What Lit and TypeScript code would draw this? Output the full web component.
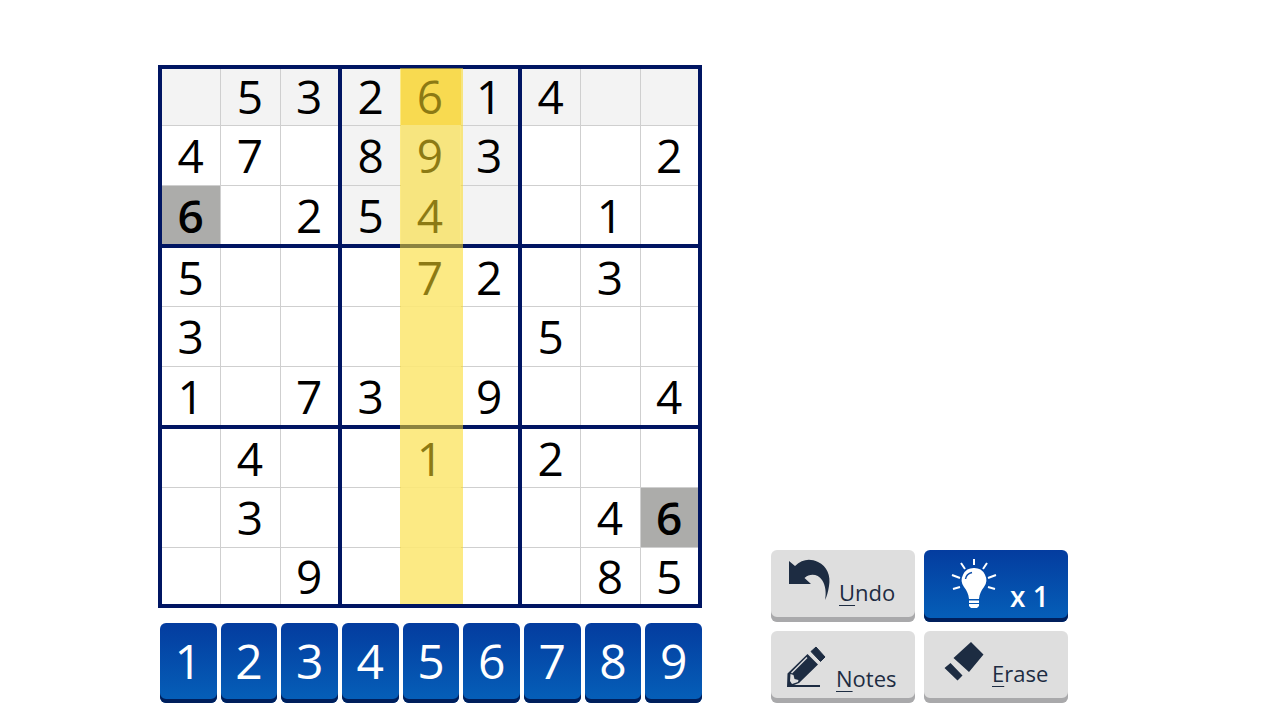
import { LitElement, html, css } from "lit";
import { customElement, state } from "lit/decorators.js";
import { classMap } from "lit/directives/class-map.js";

const PUZZLE = [
  " 532614  ",
  "47 893  2",
  "6 254  1 ",
  "5   72 3 ",
  "3     5  ",
  "1 73 9  4",
  " 4  1 2  ",
  " 3     46",
  "  9    85",
];

@customElement("app-root")
export class AppRoot extends LitElement {
  static styles = css`
    :host {
      display: block;
      min-height: 100vh;
      background: #fff;
      font-family: "Open Sans", "Noto Sans", sans-serif;
      color: #000;
    }
    .game {
      display: flex;
      align-items: flex-end;
      gap: 69px;
      padding: 65px 40px 16px 158px;
    }
    .play {
      flex: 0 1 544px;
      display: flex;
      flex-direction: column;
      gap: 15px;
    }
    .board {
      position: relative;
    }
    .grid {
      width: 100%;
      border-collapse: collapse;
      table-layout: fixed;
      border: 4px solid #001562;
    }
    .cell {
      box-sizing: border-box;
      height: 60px;
      padding: 0;
      border: 1px solid #cfcfcf;
      text-align: center;
      vertical-align: middle;
      font-size: 46px;
      line-height: 52px;
      font-weight: 400;
    }
    .cell.top {
      height: 58px;
      padding-bottom: 2px;
    }
    .cell.hinted {
      border-right-color: #fff;
      border-bottom-color: #f4f4f4;
    }
    .cell.before-hint {
      border-right-color: #fff;
    }
    .cell.right {
      border-right: 4px solid #001562;
    }
    .cell.below {
      height: 61px;
      border-bottom: 4px solid #001562;
    }
    .cell.last {
      height: 59px;
      border-bottom: 4px solid #001562;
    }
    .cell.shaded {
      background: #f3f3f3;
    }
    .cell.crossing {
      background: #f5da88;
      border-right-color: #f5da88;
    }
    .cell.match {
      background: #acacaa;
      font-weight: 600;
    }
    .column-hint {
      position: absolute;
      top: 3px;
      bottom: 4px;
      left: 44.5%;
      width: 11.5%;
      background: rgba(250, 218, 36, 0.56);
      pointer-events: none;
    }
    .digits {
      display: grid;
      grid-template-columns: repeat(9, 1fr);
      gap: 4px;
      padding: 0 0 0 2px;
    }
    .key {
      border: 0;
      margin: 0;
      padding: 0;
      border-radius: 6px;
      color: #fff;
      background: linear-gradient(#043c9f, #0560b9);
      box-shadow: inset 0 -4px 0 #001f5c;
      font-family: inherit;
      cursor: pointer;
    }
    .digit {
      height: 80px;
      padding-bottom: 4px;
      font-size: 48px;
      line-height: 72px;
      font-weight: 400;
    }
    .tools {
      flex: 0 1 297px;
      display: grid;
      grid-template-columns: 1fr 1fr;
      gap: 9px;
    }
    .tool {
      display: flex;
      align-items: flex-end;
      height: 72px;
      padding: 0 0 12px 18px;
      gap: 8px;
      font-size: 22px;
      line-height: 36px;
    }
    .plain {
      color: #1d2c42;
      background: #dedede;
      box-shadow: inset 0 -5px 0 #a9a9ab;
    }
    .tool.low {
      padding: 0 0 7px 16px;
    }
    .tool.hint {
      padding: 0 0 8px 26px;
      gap: 12px;
      font-weight: 600;
      font-size: 28px;
    }
    .label {
      font-weight: 400;
    }
    u {
      text-decoration-thickness: 1px;
      text-underline-offset: 4px;
    }
    .icon {
      align-self: flex-start;
      display: block;
      flex: none;
    }
  `;

  @state() private grid = PUZZLE;

  private shaded(r: number, c: number) {
    return r === 0 || (r < 3 && c > 2 && c < 6);
  }

  private renderCell(v: string, r: number, c: number) {
    const classes = {
      cell: true,
      top: r === 0,
      last: r === 8,
      hinted: c === 4,
      "before-hint": c === 3,
      right: c === 2 || c === 5,
      below: r === 2 || r === 5,
      shaded: this.shaded(r, c),
      crossing: r === 0 && c === 4,
      match: v === "6" && c !== 4,
    };
    return html`<td class=${classMap(classes)}>${v.trim()}</td>`;
  }

  render() {
    return html`
      <main class="game">
        <section class="play">
          <div class="board">
            <table class="grid">
              <tbody>
                ${this.grid.map(
                  (row, r) => html`<tr>
                    ${[...row].map((v, c) => this.renderCell(v, r, c))}
                  </tr>`
                )}
              </tbody>
            </table>
            <div class="column-hint"></div>
          </div>
          <div class="digits">
            ${[1, 2, 3, 4, 5, 6, 7, 8, 9].map(
              (n) => html`<button class="key digit">${n}</button>`
            )}
          </div>
        </section>
        <section class="tools">
          <button class="key tool plain">
            <svg class="icon" width="42" height="54" viewBox="0 0 42 54">
              <path d="M0 11 L6 16 C13 9 21 8 29 12 C38 16 42 26 40 36 C39 42 38 46 36 50 C37.500 43 36.500 35 33 30 C29 24 21 23 15.500 28 L22 34 H0 Z" fill="#1d2c42"/>
            </svg>
            <span class="label"><u>U</u>ndo</span>
          </button>
          <button class="key tool hint">
            <svg class="icon" width="48" height="62" viewBox="0 0 48 62" fill="none">
              <path d="M24 18 A12 12 0 0 0 14 37 C17 41 18.500 44 19 49 H29 C29.500 44 31 41 34 37 A12 12 0 0 0 24 18 Z" fill="#fff"/>
              <path d="M19 50.500 H29 V53 H19 Z M19 54 H29 V56 L27 58 H21 L19 56 Z" fill="#fff"/>
              <path d="M15.500 29 C16 26 18 23.500 22 22.500" stroke="#0a4ba8" stroke-width="1.500"/>
              <path d="M24 9 V15 M11 13 L15 19 M37 13 L33 19 M2 25 L10 28 M46 25 L38 28 M3 39 L10 37 M45 39 L38 37" stroke="#fff" stroke-width="2"/>
            </svg>
            <span>x 1</span>
          </button>
          <button class="key tool plain low">
            <svg class="icon" width="41" height="60" viewBox="0 0 41 60">
              <path d="M29 16 L38 26 L33.500 30.500 L24 20.500 Z" fill="#1d2c42" stroke="#1d2c42" stroke-linejoin="round"/>
              <path d="M20.500 23 L31 33.500 L12 52 L7 54 H33 V56 H0 L0.500 42.500 Z" fill="#1d2c42"/>
              <path d="M3.500 43 L6.500 44 L7.500 48 L11.500 49 L11 51 L5 53 L3 50 Z" fill="#dedede"/>
              <path d="M4.500 42 L20 26.500" stroke="#dedede" stroke-width="1.500"/>
            </svg>
            <span class="label"><u>N</u>otes</span>
          </button>
          <button class="key tool plain">
            <svg class="icon" width="42" height="54" viewBox="0 0 42 54">
              <path d="M29 11 L41.500 23.500 L27 41 L11.500 27 Z M8.500 32 L20.500 44.500 L15.500 49.500 L2.500 37 Z" fill="#1d2c42"/>
            </svg>
            <span class="label"><u>E</u>rase</span>
          </button>
        </section>
      </main>
    `;
  }
}
